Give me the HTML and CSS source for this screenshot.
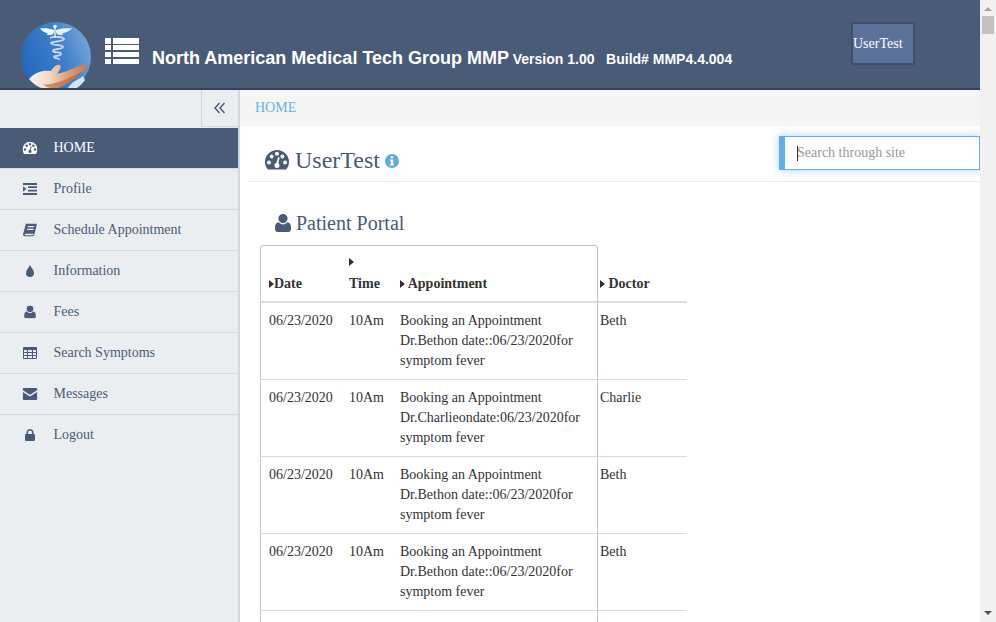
FILE: index.html
```html
<!DOCTYPE html>
<html lang="en">
<head>
    <meta charset="UTF-8">
    <meta name="viewport" content="width=device-width, initial-scale=1.0">
    <title>Patient Portal</title>
    <link rel="stylesheet" href="styles.css">
</head>
<body>
    <svg class="icon-defs" width="0" height="0">
        <symbol id="i-gauge" viewBox="0 0 24 20">
            <path fill-rule="evenodd" d="M2.8 19.5C1 17.400 0 14.800 0 12A12 12 0 0 1 24 12C24 14.800 23 17.400 21.200 19.500ZM2 12.500a2 2 0 1 0 4 0a2 2 0 1 0 -4 0ZM4.600 6.500a2 2 0 1 0 4 0a2 2 0 1 0 -4 0ZM10 3.800a2 2 0 1 0 4 0a2 2 0 1 0 -4 0ZM15.400 6.500a2 2 0 1 0 4 0a2 2 0 1 0 -4 0ZM18 12.500a2 2 0 1 0 4 0a2 2 0 1 0 -4 0ZM9.500 15.500a2.500 2.500 0 0 0 5 0c0-1-.5-1.800-1.200-2.200L14.700 7.500 13.200 7.100 11.400 13.100C10.300 13.300 9.500 14.300 9.500 15.500Z"/>
        </symbol>
        <symbol id="i-indent" viewBox="0 0 14 12">
            <path d="M0 0H14V2H0ZM5 3.300H14V5.100H5ZM5 6.800H14V8.600H5ZM0 10H14V12H0ZM0 3.300L3.500 6 0 8.700Z"/>
        </symbol>
        <symbol id="i-book" viewBox="0 0 14 13">
            <path fill-rule="evenodd" d="M3 0H14L11.500 10.500C11.300 11.500 10.500 13 9 13H2C.7 13 -.2 12 .1 10.500ZM5 2.500L4.700 3.700H11L11.300 2.500ZM4.300 5.200L4 6.400H10.300L10.600 5.200ZM2.200 10.300C1.600 10.300 1.600 11.700 2.400 11.700H9.600C10 11.700 10.300 11.300 10.400 10.900L10.500 10.300Z"/>
        </symbol>
        <symbol id="i-tint" viewBox="0 0 8 12">
            <path d="M4 0C5 2.500 8 5 8 8A4 4 0 0 1 0 8C0 5 3 2.500 4 0Z"/>
        </symbol>
        <symbol id="i-user" viewBox="0 0 16 18">
            <path d="M8 0a4.600 4.600 0 1 1 0 9.200a4.600 4.600 0 1 1 0-9.200ZM3.800 8.300C5 9.700 6.400 10.400 8 10.400S11 9.700 12.200 8.300C14.800 8.500 16 10.500 16 13.800V15.300C16 17 14.800 18 13.300 18H2.700C1.200 18 0 17 0 15.300V13.800C0 10.500 1.200 8.500 3.800 8.300Z"/>
        </symbol>
        <symbol id="i-table" viewBox="0 0 14 12">
            <path fill-rule="evenodd" d="M1 0H13A1 1 0 0 1 14 1V11A1 1 0 0 1 13 12H1A1 1 0 0 1 0 11V1A1 1 0 0 1 1 0ZM1 3V5H4V3ZM5 3V5H9V3ZM10 3V5H13V3ZM1 6V8H4V6ZM5 6V8H9V6ZM10 6V8H13V6ZM1 9V11H4V9ZM5 9V11H9V9ZM10 9V11H13V9Z"/>
        </symbol>
        <symbol id="i-mail" viewBox="0 0 14 11">
            <path d="M1 0H13A1 1 0 0 1 14 1V1.800L7 6.300 0 1.800V1A1 1 0 0 1 1 0ZM0 3.300L7 7.800 14 3.300V10A1 1 0 0 1 13 11H1A1 1 0 0 1 0 10Z"/>
        </symbol>
        <symbol id="i-lock" viewBox="0 0 10 12">
            <path fill-rule="evenodd" d="M1.500 5V3.400C1.500 1.400 3 0 5 0S8.500 1.400 8.500 3.400V5H9A1 1 0 0 1 10 6V11A1 1 0 0 1 9 12H1A1 1 0 0 1 0 11V6A1 1 0 0 1 1 5ZM3.100 5H6.900V3.400C6.900 2.300 6.100 1.600 5 1.600S3.100 2.300 3.100 3.400Z"/>
        </symbol>
    </svg>

    <div class="page">
        <div class="wrapper">
            <header class="topbar">
                <svg class="logo" width="70" height="70" viewBox="0 0 70 70">
                    <defs>
                        <linearGradient id="logo-bg" x1="0" y1="0.6" x2="1" y2="0.2">
                            <stop offset="0" stop-color="#2467bd"/>
                            <stop offset="0.55" stop-color="#3f7fca"/>
                            <stop offset="1" stop-color="#7ba8da"/>
                        </linearGradient>
                        <linearGradient id="logo-hand" x1="0" y1="0" x2="1" y2="0">
                            <stop offset="0" stop-color="#fbf6f0"/>
                            <stop offset="0.35" stop-color="#f2d9c3"/>
                            <stop offset="0.7" stop-color="#d99a70"/>
                            <stop offset="1" stop-color="#c9794c"/>
                        </linearGradient>
                    </defs>
                    <circle cx="35" cy="35" r="35" fill="url(#logo-bg)"/>
                    <path d="M47 66C50 60 57 58 62 54L64 58C60 64 54 68 47 70Z" fill="#d5e3f3"/>
                    <path d="M34 4V16" stroke="#dfeaf5" stroke-width="1.500"/>
                    <circle cx="34" cy="4.500" r="1.800" fill="#eef4fa"/>
                    <path d="M33 8C28 6 23 6 19 6.500C21 9 24 11 27 11.500C25 12 26 13.500 29 13C31 13 33 12 33 10Z" fill="#f1f6fb"/>
                    <path d="M35 8C40 6 46 6 51 6.500C48 9 45 11 41 11.500C43 12 42 13.500 39 13C37 13 35 12 35 10Z" fill="#e6eff8"/>
                    <path d="M29 16C33 14 42 15 43 17C42 20 31 19 30 21C31 24 42 22 42 25C41 28 32 26 32 29C33 31 41 30 40 32C39 35 33 33 33 35C34 37 39 36 38 38" fill="none" stroke="#e4edf7" stroke-width="1.800" opacity="0.8"/>
                    <path d="M8 57C14 50 22 48 30 49C33 44 36 42 39 43C41 45 38 49 36 52C46 50 56 44 65 42C67 44 66 46 62 49C54 56 46 63 36 66C26 70 16 66 8 57Z" fill="url(#logo-hand)"/>
                    <path d="M36 66C46 63 54 56 62 49C56 52 46 58 34 61C30 62 26 63 22 62C26 66 31 67 36 66Z" fill="#a85f3c" opacity="0.6"/>
                </svg>
                <svg class="menu-icon" width="34" height="26" viewBox="0 0 34 26">
                    <path d="M0 0H6V6H0ZM8 0H34V6H8ZM0 7H6V12H0ZM8 7H34V12H8ZM0 14H6V19H0ZM8 14H34V19H8ZM0 21H6V26H0ZM8 21H34V26H8Z" fill="#fff"/>
                </svg>
                <div class="brand">North American Medical Tech Group MMP <small>Version 1.00 &nbsp; Build# MMP4.4.004</small></div>
                <button class="user-btn" type="button">UserTest</button>
            </header>

            <div class="layout">
                <aside class="sidebar">
                    <div class="sidebar-top">
                        <button class="collapse-btn" type="button" aria-label="Collapse">
                            <svg width="12" height="12" viewBox="0 0 12 12">
                                <path d="M5.500 1L1 6 5.500 11M10.500 1L6 6 10.500 11" fill="none" stroke="currentColor" stroke-width="1.500"/>
                            </svg>
                        </button>
                    </div>
                    <ul class="nav">
                        <li class="nav-item active"><svg class="nav-icon" width="15" height="13"><use href="#i-gauge"/></svg>HOME</li>
                        <li class="nav-item"><svg class="nav-icon" width="15" height="12"><use href="#i-indent"/></svg>Profile</li>
                        <li class="nav-item"><svg class="nav-icon" width="14" height="13"><use href="#i-book"/></svg>Schedule Appointment</li>
                        <li class="nav-item"><svg class="nav-icon" width="8" height="12"><use href="#i-tint"/></svg>Information</li>
                        <li class="nav-item"><svg class="nav-icon" width="12" height="13"><use href="#i-user"/></svg>Fees</li>
                        <li class="nav-item"><svg class="nav-icon" width="14" height="12"><use href="#i-table"/></svg>Search Symptoms</li>
                        <li class="nav-item"><svg class="nav-icon" width="15" height="12"><use href="#i-mail"/></svg>Messages</li>
                        <li class="nav-item"><svg class="nav-icon" width="10" height="12"><use href="#i-lock"/></svg>Logout</li>
                    </ul>
                </aside>

                <main class="content">
                    <div class="breadcrumb">HOME</div>
                    <div class="page-head">
                        <h1 class="page-title">
                            <svg class="title-icon" width="24" height="20"><use href="#i-gauge"/></svg>
                            UserTest
                            <svg class="info-icon" width="14" height="14" viewBox="0 0 14 14">
                                <path fill-rule="evenodd" d="M7 0a7 7 0 1 1 0 14a7 7 0 1 1 0-14ZM5.800 2.300V4.300H8.200V2.300ZM5 5.500V6.900H5.800V10H5V11.500H9V10H8.200V5.500Z" fill="currentColor"/>
                            </svg>
                        </h1>
                        <div class="search-box">
                            <input class="search" type="text" placeholder="Search through site">
                            <span class="search-caret"></span>
                        </div>
                    </div>

                    <section class="portal">
                        <h2 class="portal-title"><svg class="portal-icon" width="16" height="18"><use href="#i-user"/></svg>Patient Portal</h2>
                        <table class="grid">
                            <colgroup>
                                <col class="col-date">
                                <col class="col-time">
                                <col class="col-appt">
                                <col class="col-doctor">
                            </colgroup>
                            <thead>
                                <tr>
                                    <th><span class="sort"></span>Date</th>
                                    <th><span class="sort"></span> Time</th>
                                    <th><span class="sort"></span> Appointment</th>
                                    <th><span class="sort"></span> Doctor</th>
                                </tr>
                            </thead>
                            <tbody>
                                <tr>
                                    <td>06/23/2020</td>
                                    <td>10Am</td>
                                    <td>Booking an Appointment Dr.Bethon date::06/23/2020for symptom fever</td>
                                    <td>Beth</td>
                                </tr>
                                <tr>
                                    <td>06/23/2020</td>
                                    <td>10Am</td>
                                    <td>Booking an Appointment Dr.Charlieondate:06/23/2020for symptom fever</td>
                                    <td>Charlie</td>
                                </tr>
                                <tr>
                                    <td>06/23/2020</td>
                                    <td>10Am</td>
                                    <td>Booking an Appointment Dr.Bethon date::06/23/2020for symptom fever</td>
                                    <td>Beth</td>
                                </tr>
                                <tr>
                                    <td>06/23/2020</td>
                                    <td>10Am</td>
                                    <td>Booking an Appointment Dr.Bethon date::06/23/2020for symptom fever</td>
                                    <td>Beth</td>
                                </tr>
                                <tr class="row-next">
                                    <td></td>
                                    <td></td>
                                    <td></td>
                                    <td></td>
                                </tr>
                            </tbody>
                        </table>
                    </section>
                </main>
            </div>
        </div>

        <div class="scrollbar">
            <span class="scroll-up"></span>
            <span class="scroll-thumb"></span>
            <span class="scroll-down"></span>
        </div>
    </div>
</body>
</html>
```

FILE: styles.css
```css
/* Global */
html, body {
    margin: 0;
    padding: 0;
    height: 100%;
    overflow: hidden;
}

body {
    font-family: "Liberation Serif", serif;
    font-size: 14px;
    line-height: 20px;
    color: #333;
    background-color: #fff;
}

.icon-defs {
    display: block;
    height: 0;
}

.page {
    display: flex;
    height: 622px;
}

.wrapper {
    flex: 1;
    min-width: 0;
    display: flex;
    flex-direction: column;
}

/* Top bar */
.topbar {
    flex: none;
    display: flex;
    align-items: flex-start;
    box-sizing: border-box;
    height: 90px;
    padding-left: 21px;
    background-color: #4a5b78;
    border-bottom: 2px solid #374358;
    overflow: hidden;
}

.logo {
    flex: none;
    margin-top: 22px;
}

.menu-icon {
    flex: none;
    margin: 38px 0 0 14px;
}

.brand {
    margin: 47px 0 0 13px;
    font-family: "Liberation Sans", sans-serif;
    font-size: 18px;
    font-weight: bold;
    line-height: 22px;
    color: #fff;
    white-space: nowrap;
}

.brand small {
    margin-left: -1px;
    font-size: 14px;
}

.user-btn {
    flex: none;
    box-sizing: border-box;
    width: 64px;
    height: 43px;
    margin: 22px 65px 0 auto;
    padding: 0;
    font-family: inherit;
    font-size: 14px;
    color: #fff;
    text-align: left;
    background-color: #5a7199;
    border: 2px solid #3f4f6b;
}

/* Sidebar */
.layout {
    flex: 1;
    min-height: 0;
    display: flex;
}

.sidebar {
    flex: none;
    box-sizing: border-box;
    width: 240px;
    background-color: #ebeef1;
    border-right: 2px solid #ced9e3;
}

.sidebar-top {
    display: flex;
    justify-content: flex-end;
    height: 38px;
}

.collapse-btn {
    display: flex;
    align-items: center;
    justify-content: center;
    box-sizing: border-box;
    width: 37px;
    height: 37px;
    padding: 0;
    color: #4a5b78;
    background-color: #ebeef1;
    border: none;
    border-left: 1px solid #ced9e3;
    border-bottom: 1px solid #ced9e3;
}

.nav {
    list-style: none;
    margin: 0;
    padding: 0;
}

.nav-item {
    position: relative;
    display: flex;
    align-items: center;
    box-sizing: border-box;
    height: 41px;
    padding-left: 53.5px;
    color: #4a5b78;
    border-bottom: 1px solid #d5dbe3;
}

.nav-item:last-child {
    border-bottom-color: transparent;
}

.nav-item.active {
    color: #fff;
    background-color: #4a5b78;
}

/* icon sits centred in the left gutter of the row */
.nav-icon {
    position: absolute;
    left: 30px;
    top: 50%;
    transform: translate(-50%, -50%);
    fill: currentColor;
}

/* Main area */
.content {
    flex: 1;
    min-width: 0;
    overflow: hidden;
}

.breadcrumb {
    height: 36px;
    padding-left: 15px;
    line-height: 35px;
    color: #5db4e4;
    background-color: #f5f5f5;
}

.page-head {
    display: flex;
    justify-content: space-between;
    box-sizing: border-box;
    height: 56px;
    margin-left: 8px;
    padding: 10px 0 0 17px;
    border-bottom: 1px solid #e7e9ec;
}

.page-title {
    display: flex;
    align-items: center;
    height: 28px;
    margin: 10px 0 0;
    font-size: 24px;
    font-weight: normal;
    line-height: 28px;
    color: #4a5b78;
}

.title-icon {
    margin-right: 6px;
    fill: currentColor;
}

.info-icon {
    margin: 1px 0 0 5px;
    color: #5aaed9;
}

.search-box {
    position: relative;
    width: 201px;
    height: 34px;
}

.search {
    box-sizing: border-box;
    width: 201px;
    height: 34px;
    padding: 0 8px 0 12px;
    font-family: inherit;
    font-size: 14px;
    color: #333;
    border: 1px solid #64aee8;
    border-left-width: 6px;
    outline: none;
    box-shadow: 0 0 8px rgba(100, 174, 232, 0.55);
}

.search::placeholder {
    color: #999;
}

/* text cursor of the focused field */
.search-caret {
    position: absolute;
    left: 18px;
    top: 10px;
    width: 1px;
    height: 15px;
    background-color: #333;
}

/* Patient portal */
.portal {
    padding: 27px 0 0 20px;
}

.portal-title {
    display: flex;
    align-items: center;
    height: 28px;
    margin: 0 0 8px 15px;
    font-size: 20px;
    font-weight: normal;
    line-height: 28px;
    color: #4a5b78;
}

.portal-icon {
    margin-right: 5px;
    fill: currentColor;
}

.grid {
    table-layout: fixed;
    width: 427px;
    border-collapse: separate;
    border-spacing: 0;
}

.col-date {
    width: 81px;
}

.col-time {
    width: 51px;
}

.col-appt {
    width: 206px;
}

.col-doctor {
    width: 89px;
}

.grid th,
.grid td {
    padding: 8px;
    text-align: left;
    vertical-align: top;
    border-bottom: 1px solid #d5dbe3;
}

.grid th {
    padding-top: 5px;
    padding-bottom: 6px;
    line-height: 22px;
    vertical-align: bottom;
    border-top: 1px solid #b8c5d8;
    border-bottom: 2px solid #dcdcdc;
}

.grid th:first-child,
.grid td:first-child {
    border-left: 1px solid #b8c5d8;
}

.grid th:nth-child(3),
.grid td:nth-child(3) {
    border-right: 1px solid #b8c5d8;
}

.grid th:first-child {
    border-top-left-radius: 4px;
}

.grid th:nth-child(3) {
    border-top-right-radius: 4px;
}

/* doctor column is outside the rounded box */
.grid th:last-child,
.grid td:last-child {
    padding-left: 2px;
    padding-right: 0;
}

.grid th:last-child {
    border-top: none;
}

.row-next td {
    height: 60px;
}

.sort {
    display: inline-block;
    width: 0;
    height: 0;
    border-top: 4px solid transparent;
    border-bottom: 4px solid transparent;
    border-left: 5px solid #3b2a33;
}

/* Scrollbar */
.scrollbar {
    flex: none;
    position: relative;
    width: 16px;
    background-color: #f1f1f1;
}

.scroll-up,
.scroll-down {
    position: absolute;
    left: 4px;
    width: 0;
    height: 0;
    border-left: 4px solid transparent;
    border-right: 4px solid transparent;
}

.scroll-up {
    top: 7px;
    border-bottom: 4px solid #a3a3a3;
}

.scroll-down {
    bottom: 7px;
    border-top: 4px solid #505050;
}

.scroll-thumb {
    position: absolute;
    left: 2px;
    top: 16px;
    width: 12px;
    height: 18px;
    background-color: #c1c1c1;
}
```
